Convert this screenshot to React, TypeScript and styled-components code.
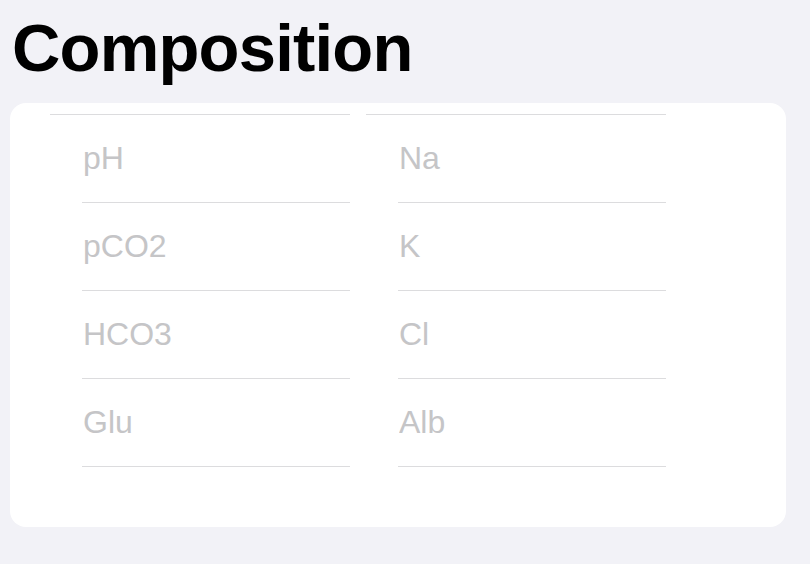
import styled, { createGlobalStyle } from "styled-components";

interface Field {
  id: string;
  label: string;
}

const leftFields: Field[] = [
  { id: "ph", label: "pH" },
  { id: "pco2", label: "pCO2" },
  { id: "hco3", label: "HCO3" },
  { id: "glu", label: "Glu" },
];

const rightFields: Field[] = [
  { id: "na", label: "Na" },
  { id: "k", label: "K" },
  { id: "cl", label: "Cl" },
  { id: "alb", label: "Alb" },
];

const GlobalStyle = createGlobalStyle`
  html, body {
    margin: 0;
    padding: 0;
    background: #f2f2f7;
    font-family: "Liberation Sans", Arial, sans-serif;
  }
`;

const Page = styled.div`
  width: 810px;
  height: 564px;
  box-sizing: border-box;
  padding: 0 24px 0 10px;
  overflow: hidden;
`;

const Title = styled.h1`
  margin: 0;
  padding: 10px 0 0 2px;
  height: 103px;
  box-sizing: border-box;
  font-size: 67px;
  line-height: 76px;
  font-weight: 700;
  color: #000;
  letter-spacing: -0.8px;
`;

const Card = styled.div`
  background: #fff;
  border-radius: 16px;
  padding: 11px 0 60px 40px;
  display: flex;
  gap: 16px;
`;

const Column = styled.div`
  width: 300px;
  border-top: 1px solid #dcdcde;
`;

const Row = styled.div`
  margin-left: 32px;
  height: 87px;
  border-bottom: 1px solid #dcdcde;
  display: flex;
  align-items: center;
`;

const Input = styled.input`
  border: none;
  outline: none;
  background: transparent;
  padding: 0 0 0 1px;
  width: 100%;
  font-family: "Liberation Sans", Arial, sans-serif;
  font-size: 32px;
  color: #000;
  &::placeholder {
    color: #c5c5c7;
  }
`;

const FieldColumn: React.FC<{ fields: Field[] }> = ({ fields }) => (
  <Column>
    {fields.map((f) => (
      <Row key={f.id}>
        <Input placeholder={f.label} />
      </Row>
    ))}
  </Column>
);

export default function App() {
  return (
    <Page>
      <GlobalStyle />
      <Title>Composition</Title>
      <Card>
        <FieldColumn fields={leftFields} />
        <FieldColumn fields={rightFields} />
      </Card>
    </Page>
  );
}
